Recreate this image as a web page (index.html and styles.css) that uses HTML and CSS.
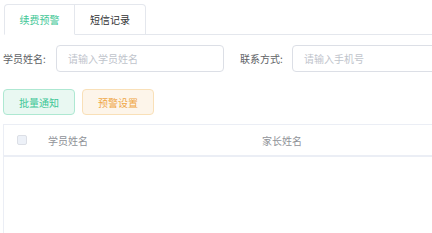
FILE: index.html
```html
<!DOCTYPE html>
<html>
<head>
<meta charset="utf-8">
<link rel="stylesheet" href="styles.css">
</head>
<body>
<div class="page">
  <div class="tabs">
    <div class="tab active">续费预警</div>
    <div class="tab">短信记录</div>
    <div class="tab-rest"></div>
  </div>
  <div class="form-row">
    <label class="label">学员姓名:</label>
    <div class="input first"><span class="ph">请输入学员姓名</span></div>
    <label class="label second">联系方式:</label>
    <div class="input grow"><span class="ph">请输入手机号</span></div>
  </div>
  <div class="btn-row">
    <div class="btn green">批量通知</div>
    <div class="btn orange">预警设置</div>
  </div>
  <div class="table">
    <div class="thead">
      <div class="cell check"><span class="box"></span></div>
      <div class="cell c1">学员姓名</div>
      <div class="cell c2">家长姓名</div>
    </div>
    <div class="tbody"></div>
  </div>
</div>
</body>
</html>
```
FILE: styles.css
```css
* { box-sizing: border-box; }
html, body { margin: 0; padding: 0; background: #fff; }
body {
  font-family: "Noto Sans CJK SC", "Noto Sans", sans-serif;
  font-size: 10px;
  color: #606266;
  overflow: hidden;
  width: 432px;
  height: 233px;
}
.page { padding: 4px 0 0 3px; }
.tabs { display: flex; height: 31px; }
.tab {
  width: 71px;
  height: 31px;
  border: 1px solid #e4e7ed;
  border-bottom: 1px solid #e4e7ed;
  display: flex;
  align-items: center;
  justify-content: center;
  color: #303133;
  font-size: 10px;
}
.tab.active {
  color: #3fc796;
  border-bottom-color: transparent;
  border-radius: 4px 0 0 0;
  margin-left: 1px;
}
.tab + .tab { border-left: none; border-radius: 0 4px 0 0; }
.tab-rest { flex: 1; border-bottom: 1px solid #e4e7ed; }
.form-row {
  display: flex;
  align-items: center;
  margin-top: 10px;
  height: 27px;
}
.label { width: 53px; color: #606266; white-space: nowrap; }
.label.second { width: 52px; margin-left: 16px; }
.input {
  height: 27px;
  border: 1px solid #dcdfe6;
  border-radius: 4px;
  display: flex;
  align-items: center;
  padding-left: 11px;
}
.input.first { width: 168px; }
.input.grow { flex: 1; margin-right: -10px; }
.ph { color: #c0c4cc; }
.btn-row { display: flex; gap: 7px; margin-top: 17px; }
.btn {
  width: 72px;
  height: 26px;
  border-radius: 4px;
  display: flex;
  align-items: center;
  justify-content: center;
}
.btn.green { background: #e9f8f2; border: 1px solid #aee8d2; color: #3fc796; }
.btn.orange { background: #fdf5ea; border: 1px solid #f9e0b8; color: #efa746; }
.table {
  margin-top: 9px;
  border-top: 1px solid #ebeef5;
  border-left: 1px solid #ebeef5;
  height: 120px;
}
.thead {
  display: flex;
  align-items: center;
  height: 32px;
  border-bottom: 2px solid #ebeef5;
  color: #909399;
}
.cell.check { width: 44px; padding-left: 13px; display: flex; align-items: center; }
.box {
  width: 10px;
  height: 10px;
  border: 1px solid #dcdfe6;
  border-radius: 2px;
  background: #edf1f8;
}
.cell.c1 { width: 214px; }
.cell.c2 { flex: 1; }
```
